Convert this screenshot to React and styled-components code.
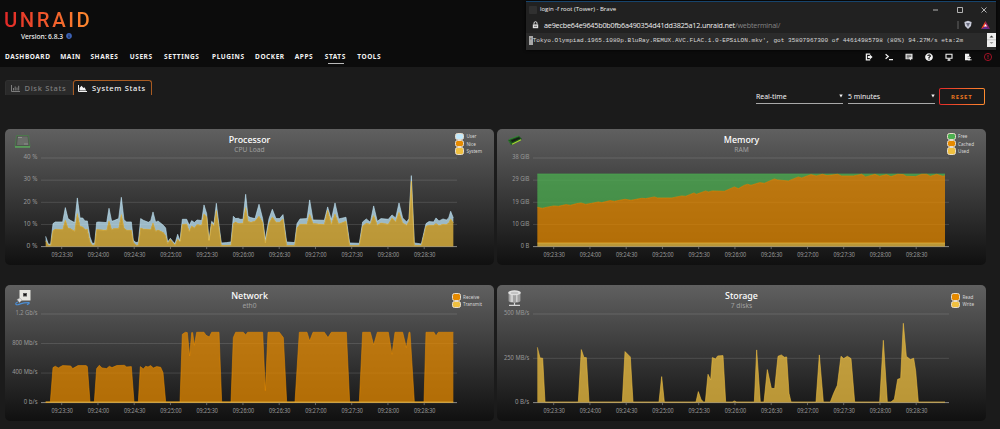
import React from "react";
import styled, { createGlobalStyle, css } from "styled-components";
import { FaQuestionCircle, FaInfoCircle } from "react-icons/fa";

const GlobalStyle = createGlobalStyle`
  * {
    box-sizing: border-box;
  }
  body {
    margin: 0;
    background: #1b1b1b;
    color: #f2f2f2;
    font-family: "Noto Sans", sans-serif;
    overflow: hidden;
  }
`;

const Page = styled.div`
  width: 1000px;
  height: 429px;
  position: relative;
`;
const Header = styled.header`
  height: 67px;
  background: #0c0c0c;
  display: flex;
  flex-direction: column;
  padding: 9px 5px 0;
`;
const Logo = styled.div`
  align-self: flex-start;
  height: 22px;
  margin-left: -1px;
  font-family: Roboto, sans-serif;
  font-size: 20.3px;
  line-height: 22px;
  font-weight: 500;
  letter-spacing: 2.6px;
  color: transparent;
  background: linear-gradient(90deg, #e22828, #ff8c2f);
  background-clip: text;
  -webkit-background-clip: text;
`;
const Version = styled.div`
  display: flex;
  align-items: center;
  gap: 3.5px;
  height: 10px;
  padding-left: 16px;
  font-size: 6.7px;
  font-weight: 500;
  letter-spacing: -0.05px;
  svg {
    color: #3c62b5;
    font-size: 6px;
  }
`;
const NavBar = styled.div`
  display: flex;
  justify-content: space-between;
  height: 26px;
  padding-top: 11px;
`;
const Nav = styled.nav`
  display: flex;
  gap: 11px;
`;
const NavItem = styled.a`
  width: ${(p) => p.$w}px;
  height: 12px;
  font-size: 6.5px;
  line-height: 10px;
  font-weight: 700;
  letter-spacing: 0.55px;
  white-space: nowrap;
  ${(p) =>
    p.$active &&
    css`
      background: linear-gradient(#b9b9b9, #b9b9b9) 3px 11px / 16px 1px
        no-repeat;
    `}
`;
const Tools = styled.div`
  display: flex;
  align-items: center;
  height: 10px;
  gap: 11.9px;
  padding-right: 2.7px;
  svg {
    display: block;
    width: 8px;
    height: 8px;
  }
`;

const Bar = styled.div`
  display: flex;
  justify-content: space-between;
  height: 62px;
  padding: 13px 15.5px 0 5px;
`;
const Tabs = styled.div`
  display: flex;
`;
const Tab = styled.div`
  display: flex;
  align-items: center;
  gap: 5px;
  width: ${(p) => p.$w}px;
  height: 15px;
  padding-left: ${(p) => (p.$active ? 4 : 4.5)}px;
  border: 1px solid ${(p) => (p.$active ? "#a85b22" : "#303030")};
  border-bottom: 0;
  border-radius: 3px 3px 0 0;
  background: ${(p) => (p.$active ? "#1b1b1b" : "#2a2a2a")};
  color: ${(p) => (p.$active ? "#f2f2f2" : "#7d7d7d")};
  font-size: 7.5px;
  font-weight: 500;
  letter-spacing: 0.68px;
  white-space: nowrap;
  svg {
    width: 9px;
    height: 7px;
  }
`;
const Filters = styled.div`
  display: flex;
  gap: 5px;
  padding-top: 8px;
`;
const Select = styled.div`
  display: flex;
  justify-content: space-between;
  align-items: center;
  width: 87px;
  height: 16px;
  padding-top: 1.5px;
  border-bottom: 1px solid #a9a9a9;
  font-size: 6.9px;
  svg {
    width: 4px;
    height: 4px;
  }
`;
const Reset = styled.button`
  width: 45.5px;
  height: 17px;
  margin: 0 0 0 -1px;
  padding: 0;
  border: 1.5px solid transparent;
  border-radius: 2px;
  background:
    linear-gradient(#1b1b1b, #1b1b1b) padding-box,
    linear-gradient(90deg, #e22828, #ff8c2f) border-box;
  color: #e8751f;
  font: 700 6px "Noto Sans", sans-serif;
  letter-spacing: 0.8px;
`;

const Charts = styled.main`
  display: grid;
  grid-template-columns: 489px 489px;
  grid-auto-rows: 136px;
  gap: 20.3px 3px;
  padding-left: 5px;
`;
const Card = styled.section`
  border-radius: 5px;
  background: linear-gradient(#606060, #101010);
`;
const CardHead = styled.div`
  display: grid;
  grid-template-columns: 1fr auto 1fr;
  height: 29px;
  padding: 5px 12px 0 9px;
`;
const Titles = styled.div`
  text-align: center;
  padding: 0.7px 0 0 3px;
`;
const Title = styled.h2`
  margin: 0;
  font-size: 8.9px;
  line-height: 10px;
  font-weight: 500;
  color: #fff;
`;
const Subtitle = styled.div`
  font-size: 6.7px;
  line-height: 10px;
  color: #a0a0a0;
`;
const Legend = styled.div`
  justify-self: end;
  padding-top: ${(p) => (p.$low ? 3 : 0)}px;
  margin-top: ${(p) => (p.$low ? 0 : -1.5)}px;
`;
const LegendItem = styled.div`
  display: flex;
  align-items: center;
  gap: 2px;
  height: 7.4px;
  font-size: 4.6px;
  color: #d8d8d8;
`;
const Swatch = styled.span`
  width: 9.4px;
  height: 7.2px;
  border: 1px solid #e8dccb;
  border-radius: 2.5px;
  background: ${(p) => p.$color};
`;
const Plot = styled.svg`
  display: block;
  overflow: visible;
  text {
    font-family: "Noto Sans", sans-serif;
    font-size: 6.2px;
    fill: #999;
  }
`;

const Popup = styled.aside`
  position: absolute;
  top: 1px;
  left: 526px;
  width: 470px;
  height: 49px;
  border-top: 1px solid #17446c;
  background: #212121;
  font-family: "Open Sans", sans-serif;
  box-shadow: 0 0 3px #000;
`;
const PopupTitle = styled.div`
  display: flex;
  align-items: center;
  height: 15px;
  padding: 0 9px 0 3px;
  font-size: 6px;
  line-height: 15px;
  span {
    margin-left: 3px;
  }
`;
const Favicon = styled.i`
  width: 8px;
  height: 8px;
  border-radius: 1px;
  background: #303030;
`;
const WindowButtons = styled.svg`
  margin-left: auto;
`;
const Address = styled.div`
  display: flex;
  align-items: center;
  height: 16px;
  padding: 0 5px 0 6px;
  font-size: 7.2px;
  letter-spacing: -0.18px;
  em {
    font-style: normal;
    color: #858585;
  }
  p {
    margin: 0 auto 0 5px;
  }
`;
const Terminal = styled.div`
  display: flex;
  height: 17px;
  padding-left: 3px;
  background: #2b2b2b;
  color: #d8d8d8;
  font: 6.08px / 15px "Liberation Mono", monospace;
  white-space: pre;
`;
const Cursor = styled.span`
  height: 9px;
  margin-top: 2.5px;
  line-height: 9px;
  background: #a8a8a8;
  color: #333;
`;
const Scroll = styled.svg`
  margin-left: auto;
`;

const NAV = [
  ["DASHBOARD", 44.2],
  ["MAIN", 19.3],
  ["SHARES", 28.3],
  ["USERS", 23.3],
  ["SETTINGS", 37],
  ["PLUGINS", 32],
  ["DOCKER", 28.7],
  ["APPS", 19],
  ["STATS", 21.5],
  ["TOOLS", 23],
];

const TIMES = [
  "09:23:30",
  "09:24:00",
  "09:24:30",
  "09:25:00",
  "09:25:30",
  "09:26:00",
  "09:26:30",
  "09:27:00",
  "09:27:30",
  "09:28:00",
  "09:28:30",
];

const PLOT_X = 36;
const PLOT_W = 416;
const PLOT_H = 88.6;

// samples are stored as "x,y" in thirds of a pixel, in chunks with their own x offset
const trace = (base, ...chunks) =>
  chunks.flatMap(([offset, pts]) =>
    pts.split(" ").map((pt) => {
      const [x, y] = pt.split(",").map(Number);
      return [PLOT_X + (x + offset) / 3, PLOT_H - (base - y) / 3];
    })
  );

const cpuUser = trace(
  374,
  [
    -123,
    "137,343 145,366 152,367 159,305 166,300 188,300 196,257 204,290 211,295 224,302 232,228 240,288 248,288 255,297 262,297 270,345 277,364 284,364 290,301 296,300 320,302 327,259 335,298 342,296 356,290 364,226 372,294 380,300 394,300 400,355 408,362 415,360 422,290 430,295 445,301 452,297 459,270 467,301 474,297 490,310 497,318 503,360 511,349 518,358 525,365 533,337 540,357 547,292 560,292 568,310 575,296 583,302 591,294 605,296 612,249 620,275 627,354 635,298 642,305 649,244 657,310 664,363 680,362 693,360 700,283 707,290 715,289 720,292 729,292",
  ],
  [
    612,
    "2,217 9,283 17,287 30,290 42,247 53,290 61,352 72,290 82,262 93,290 104,290 114,278 125,360 149,362 156,305 165,291 186,290 194,234 204,294 238,295 248,255 259,293 270,243 281,291 303,286 314,363 343,364 353,300 364,291 376,301 386,252 397,298 408,290 430,292 441,279 452,288 462,243 473,288 485,300 492,290 499,161 508,363 529,366 543,305 552,299 566,300 573,288 582,297 594,291 604,294 611,288 617,268 625,288",
  ]
);
const cpuSystem = trace(
  374,
  [
    -123,
    "137,357 145,370 152,371 159,326 166,322 188,323 196,295 204,318 211,320 224,328 232,275 240,313 248,315 255,323 262,322 270,360 277,370 284,370 290,323 320,325 327,297 335,323 342,320 356,320 364,278 372,318 380,325 394,325 400,362 408,370 415,370 422,318 430,321 452,323 459,303 467,328 474,324 490,332 497,342 503,365 511,353 518,362 525,370 533,352 540,360 547,308 560,306 568,328 575,312 583,318 591,308 605,310 612,276 620,285 627,356 635,305 642,312 649,266 657,320 664,371 693,370 700,305 707,300 715,305 729,304",
  ],
  [
    612,
    "2,257 9,298 17,301 30,298 42,283 53,302 61,363 72,305 82,285 93,301 104,301 114,291 125,371 149,371 156,318 165,307 186,307 194,277 204,305 238,308 248,265 259,307 270,276 281,306 303,298 314,371 343,371 353,312 364,304 376,307 386,281 397,310 408,303 430,307 441,288 452,300 462,271 473,303 485,310 492,298 499,178 508,371 529,371 543,313 552,310 566,310 573,305 582,311 594,307 604,308 611,303 617,291 625,303",
  ]
);
const memTotal = trace(374, [-114, "127,156 1350,156"]);
const memCached = trace(
  374,
  [
    -114,
    "127,256 142,259 160,255 176,252 190,253 213,248 226,250 245,245 258,243 272,247 290,244 310,240 320,242 345,236 358,238 390,232 408,235 440,229 452,230 478,225 488,228 530,228 560,222 572,223 597,213 604,217 632,207 640,210 652,207 688,208 718,195 730,200 748,190",
  ],
  [
    636,
    "8,187 18,190 44,182 58,184 88,171 98,174 130,177 160,165 170,168 198,158 214,162 232,157 246,161 278,157 290,162 325,162 350,157 362,165 390,157 404,163 424,158 438,164 458,157 475,158 484,163 512,164 530,157 545,157 556,163 575,157 594,163 600,161",
  ]
);
const memUsed = trace(374, [-114, "127,363 1350,363"]);
const netReceive = trace(
  370,
  [
    -123,
    "137,368 151,368 159,265 166,261 175,266 188,259 212,260 218,268 234,259 258,259 262,262 270,368 283,368 290,268 298,258 306,266 320,268 328,261 336,265 350,259 373,258 380,263 394,262 402,368 415,368 421,262 430,269 437,261 444,263 452,259 460,266 470,262 482,264 489,280 497,368 540,368 547,165 556,159 562,160 569,230 575,160 578,160 583,198 590,159 612,159 618,168 628,173 635,159 657,159 665,368 693,368 700,175 707,159 730,159",
  ],
  [
    612,
    "2,167 8,159 53,159 61,334 69,159 103,159 115,175 125,368 150,368 163,159 186,159 194,185 204,159 238,159 249,175 259,159 304,159 314,368 343,368 353,159 376,159 386,197 397,159 430,159 441,225 450,159 473,159 484,205 492,159 495,159 508,368 537,368 543,159 567,159 573,170 580,159 625,159",
  ]
);
const netTransmit = trace(370, [-123, "137,368 1360,368"]);
const diskWrite = trace(
  370,
  [
    -114,
    "127,204 135,236 143,237 150,368 250,368 259,211 267,235 274,235 282,368 382,368 390,217 406,233 414,368 492,368 500,292 508,368 603,368 610,337 618,360 625,368 631,368 639,285 647,302 652,235 662,239 668,230 684,229 692,368 712,368 718,365 725,368",
  ],
  [
    636,
    "28,368 35,212 46,368 57,368 67,271 79,327 89,328 99,231 109,227 118,234 125,233 132,342 138,368 213,368 223,227 235,368 256,368 266,342 277,318 288,231 296,238 307,231 318,238 329,368 404,368 415,183 427,368 438,368 448,360 458,300 467,297 475,132 484,231 496,241 506,237 512,275 520,368 600,368",
  ]
);

const BLUE = "#c3e9fb";
const ORANGE = "#e68a00";
const YELLOW = "#f0c040";
const GREEN = "#4caf50";

// draws one layer of the stack, between its own line and the one below
function Area({ top, bottom, color }) {
  const floor = bottom || [
    [top[0][0], PLOT_H],
    [top[top.length - 1][0], PLOT_H],
  ];
  return (
    <g>
      <polygon
        points={[...top, ...[...floor].reverse()].join(" ")}
        fill={color}
        opacity="0.75"
      />
      <polyline
        points={top.join(" ")}
        fill="none"
        stroke={color}
        strokeWidth="0.7"
        strokeLinejoin="round"
        opacity="0.8"
      />
    </g>
  );
}

function Chart({ icon, title, subtitle, legend, ticks, labelX, children }) {
  return (
    <Card>
      <CardHead>
        {icon}
        <Titles>
          <Title>{title}</Title>
          <Subtitle>{subtitle}</Subtitle>
        </Titles>
        <Legend $low={legend.length < 3}>
          {legend.map(([name, color]) => (
            <LegendItem key={name}>
              <Swatch $color={color} />
              {name}
            </LegendItem>
          ))}
        </Legend>
      </CardHead>
      <Plot width="489" height="106">
        {ticks.map(([label, width], i) => {
          const y = (PLOT_H * i) / (ticks.length - 1);
          return (
            <g key={label}>
              <line
                x1={PLOT_X}
                x2={PLOT_X + PLOT_W}
                y1={y}
                y2={y}
                stroke={i === ticks.length - 1 ? "#888" : "#fff"}
                strokeOpacity={i === ticks.length - 1 ? 1 : 0.13}
              />
              <text
                x={labelX - width}
                y={y + 1.2}
                textLength={width}
                lengthAdjust="spacingAndGlyphs"
              >
                {label}
              </text>
            </g>
          );
        })}
        {children}
        {TIMES.map((t, i) => (
          <g key={t} transform={`translate(${56.7 + i * 36.25} ${PLOT_H})`}>
            <line y2="2.5" stroke="#888" strokeWidth="0.7" />
            <text
              x="-10.3"
              y="10.6"
              textLength="21.5"
              lengthAdjust="spacingAndGlyphs"
            >
              {t}
            </text>
          </g>
        ))}
      </Plot>
    </Card>
  );
}

const CpuIcon = () => (
  <svg width="18" height="16" viewBox="0 0 18 16">
    <path d="M2.5 1.5h12l1.5 11H1z" fill="#50544f" stroke="#4b7a4c" strokeWidth="0.9" />
    <path d="M4 2.5h9.5l1 8.5H3z" fill="#6a6d69" />
    <path d="M4 3.5h4M10 10h4" stroke="#aaa" strokeWidth="0.6" />
    <path d="M1 13h15" stroke="#63c763" />
  </svg>
);
const RamIcon = () => (
  <svg width="18" height="16" viewBox="0 0 18 16">
    <path d="M2 6l11-4 3 3-11 6z" fill="#1d521d" />
    <path d="M5 6.2l8-3 1.2 1.4-8 3.4z" fill="#171c17" />
    <path d="M6 10.3l9-4.6" stroke="#a5d82f" strokeWidth="1.2" />
    <path d="M2.3 6.5l3.3 3.8M3 5.5l10-3.7" stroke="#2e8e2e" strokeWidth="0.8" />
  </svg>
);
const NetIcon = () => (
  <svg width="18" height="17" viewBox="0 0 18 17">
    <path d="M5.5 0h11v10.5h-11z" fill="#e6e6e1" />
    <path d="M9 3h4v3.5H9z" fill="#575757" />
    <path d="M10 4h2v1.5h-2z" fill="#111" />
    <path d="M3 9.5l3-1.5 2 2-2.5 2.5z" fill="#ddd" stroke="#999" strokeWidth="0.4" />
    <path
      d="M4 12c-3 .6-3 3.4 0 2.6C8 13.4 9 12.4 15 12.6c1 .8-1 1.3-2 2.3"
      fill="none"
      stroke="#4c8fd6"
      strokeWidth="1.2"
    />
  </svg>
);
const DiskIcon = () => (
  <svg width="18" height="17" viewBox="0 0 18 17">
    <path d="M2.6 2.8v8c0 2.6 11.8 2.6 11.8 0v-8z" fill="#a2a2a2" />
    <path d="M4.5 4v8h2.5V4zM10 4v8h1.5V4z" fill="#cfcfcf" />
    <ellipse cx="8.5" cy="2.8" rx="6.3" ry="2.5" fill="#e2e2e2" />
    <ellipse cx="8.5" cy="3" rx="4" ry="1.2" fill="#c3c3c3" />
    <path d="M8.5 12.7v2M3 15.3h11" stroke="#d5d5d5" strokeWidth="1.2" />
  </svg>
);

function BrowserWindow() {
  return (
    <Popup>
      <PopupTitle>
        <Favicon />
        <span>login -f root (Tower) - Brave</span>
        <WindowButtons width="54" height="8" fill="none" stroke="#d8d8d8" strokeWidth="0.8">
          <path d="M0 4h5M24.5 1.5h5v5h-5zM48.5 1.5l5 5m0-5l-5 5" />
        </WindowButtons>
      </PopupTitle>
      <Address>
        <svg width="7" height="8" viewBox="0 0 7 8">
          <path d="M.8 3.4h5.4v3.8H.8z" fill="#ddd" />
          <path d="M2 3.5V2.2a1.5 1.5 0 013 0v1.3" fill="none" stroke="#ddd" />
          <path d="M2 5.3h3" stroke="#444" strokeWidth="0.8" />
        </svg>
        <p>
          ae9ecbe64e9645b0b0fb6a490354d41dd3825a12.unraid.net
          <em>/webterminal/</em>
        </p>
        <svg width="34" height="10" viewBox="0 0 34 10">
          <path d="M1 1v8" stroke="#777" strokeWidth="0.8" />
          <path d="M7.4 2L11 .8 14.6 2l-.6 4L11 9 8 6z" fill="#c9cbd8" />
          <path d="M9 3h4l-2 4z" fill="#6b6e80" />
          <path d="M28.5 1L24 9l4.5-2.5z" fill="#ff4724" />
          <path d="M28.5 1L33 9l-4.5-2.5z" fill="#9e1f63" />
          <path d="M24 9h9l-4.5-2.8z" fill="#662d91" />
          <path d="M28.5 4l1.5 2.6h-3z" fill="#fff" />
        </svg>
      </Address>
      <Terminal>
        <Cursor>'</Cursor>
        Tokyo.Olympiad.1965.1080p.BluRay.REMUX.AVC.FLAC.1.0-EPSiLON.mkv', got
        {" 35807967300 of 44614985798 (80%) 94.27M/s eta:2m"}
        <Scroll width="9" height="14">
          <path d="M0 0h9v14H0z" fill="#eee" />
          <path d="M0 6.8h9" stroke="#bbb" strokeWidth="0.8" />
          <path d="M2.5 4.5h4l-2-2z" fill="#333" />
          <path d="M2.5 9h4l-2 2z" fill="#999" />
        </Scroll>
      </Terminal>
    </Popup>
  );
}

function ToolIcons() {
  return (
    <Tools>
      <svg viewBox="0 0 8 8" fill="none" stroke="#f2f2f2">
        <path d="M5.2 1.2H1.4v5.6h3.8" strokeWidth="1.3" />
        <path d="M2.8 3h2V1.4L7.6 4 4.8 6.6V5h-2z" fill="#f2f2f2" stroke="none" />
      </svg>
      <svg viewBox="0 0 8 8" fill="none" stroke="#f2f2f2" strokeWidth="1.2">
        <path d="M.6 1.2l2.7 2.3L.6 5.8M4 6.7h4" />
      </svg>
      <svg viewBox="0 0 8 8">
        <path d="M.5.8h7v5.4H6v1.4L4.5 6.2h-4z" fill="#e4e4e4" />
        <path d="M1.7 2.3h4.6M1.7 3.6h4.6M1.7 4.9h2.6" stroke="#222" strokeWidth="0.6" />
      </svg>
      <FaQuestionCircle />
      <svg viewBox="0 0 8 8">
        <path d="M1 1.3h6v4H1z" fill="none" stroke="#f2f2f2" strokeWidth="1.1" />
        <path d="M2.5 7.2h3M4 5.5v1.5" stroke="#f2f2f2" strokeWidth="1.2" />
      </svg>
      <svg viewBox="0 0 8 8">
        <path d="M1 .8h4.2v2.4h.8v4H1z" fill="#f2f2f2" />
        <path d="M3.6 3.6h2.6M3.6 5.2h3" stroke="#333" strokeWidth="0.5" />
        <path d="M4 4.4h3M4 6.8h3.6" stroke="#f2f2f2" strokeWidth="0.9" />
      </svg>
      <svg viewBox="0 0 8 8" fill="none" stroke="#c4142c">
        <circle cx="4" cy="4" r="3.6" strokeWidth="0.8" />
        <path d="M4 2v2.6M4 5.2v.8" strokeWidth="0.9" />
      </svg>
    </Tools>
  );
}

function App() {
  return (
    <Page>
      <GlobalStyle />
      <Header>
        <Logo>UNRAID</Logo>
        <Version>
          Version: 6.8.3 <FaInfoCircle />
        </Version>
        <NavBar>
          <Nav>
            {NAV.map(([name, w]) => (
              <NavItem key={name} $w={w} $active={name === "STATS"}>
                {name}
              </NavItem>
            ))}
          </Nav>
          <ToolIcons />
        </NavBar>
      </Header>
      <Bar>
        <Tabs>
          <Tab $w={68}>
            <svg viewBox="0 0 9 7">
              <path d="M.5 0v6.5H9" fill="none" stroke="currentColor" />
              <path d="M2.5 3v2.5M4.2 1.5v4M6 2.5v3M7.7.8v4.7" stroke="currentColor" />
            </svg>
            Disk Stats
          </Tab>
          <Tab $w={79} $active>
            <svg viewBox="0 0 9 7">
              <path d="M.5 0v6.5H9" fill="none" stroke="currentColor" />
              <path d="M1.5 5.5V3l2-2.2L5.5 3l1-.8L8.2 5.5z" fill="currentColor" />
            </svg>
            System Stats
          </Tab>
        </Tabs>
        <Filters>
          {["Real-time", "5 minutes"].map((label) => (
            <Select key={label}>
              {label}
              <svg viewBox="0 0 4 4">
                <path d="M.3.5h3.4L2 3.5z" fill="#f2f2f2" />
              </svg>
            </Select>
          ))}
          <Reset>RESET</Reset>
        </Filters>
      </Bar>
      <Charts>
        <Chart
          icon={<CpuIcon />}
          title="Processor"
          subtitle="CPU Load"
          labelX={32.5}
          legend={[
            ["User", BLUE],
            ["Nice", ORANGE],
            ["System", YELLOW],
          ]}
          ticks={[
            ["40 %", 14],
            ["30 %", 14],
            ["20 %", 14],
            ["10 %", 14],
            ["0 %", 11],
          ]}
        >
          <Area top={cpuUser} bottom={cpuSystem} color={BLUE} />
          <Area top={cpuSystem} color={YELLOW} />
        </Chart>
        <Chart
          icon={<RamIcon />}
          title="Memory"
          subtitle="RAM"
          labelX={32.3}
          legend={[
            ["Free", GREEN],
            ["Cached", ORANGE],
            ["Used", YELLOW],
          ]}
          ticks={[
            ["38 GiB", 17],
            ["29 GiB", 17],
            ["19 GiB", 17],
            ["10 GiB", 17],
            ["0 B", 8.5],
          ]}
        >
          <Area top={memTotal} bottom={memCached} color={GREEN} />
          <Area top={memCached} bottom={memUsed} color={ORANGE} />
          <Area top={memUsed} color={YELLOW} />
        </Chart>
        <Chart
          icon={<NetIcon />}
          title="Network"
          subtitle="eth0"
          labelX={32.5}
          legend={[
            ["Receive", ORANGE],
            ["Transmit", YELLOW],
          ]}
          ticks={[
            ["1.2 Gb/s", 22],
            ["800 Mb/s", 25.3],
            ["400 Mb/s", 25.3],
            ["0 b/s", 13.7],
          ]}
        >
          <Area top={netReceive} color={ORANGE} />
          <Area top={netTransmit} color={YELLOW} />
        </Chart>
        <Chart
          icon={<DiskIcon />}
          title="Storage"
          subtitle="7 disks"
          labelX={32.3}
          legend={[
            ["Read", ORANGE],
            ["Write", YELLOW],
          ]}
          ticks={[
            ["500 MB/s", 25.3],
            ["250 MB/s", 25.3],
            ["0 B/s", 14.3],
          ]}
        >
          <Area top={diskWrite} color={YELLOW} />
        </Chart>
      </Charts>
      <BrowserWindow />
    </Page>
  );
}

export default App;
